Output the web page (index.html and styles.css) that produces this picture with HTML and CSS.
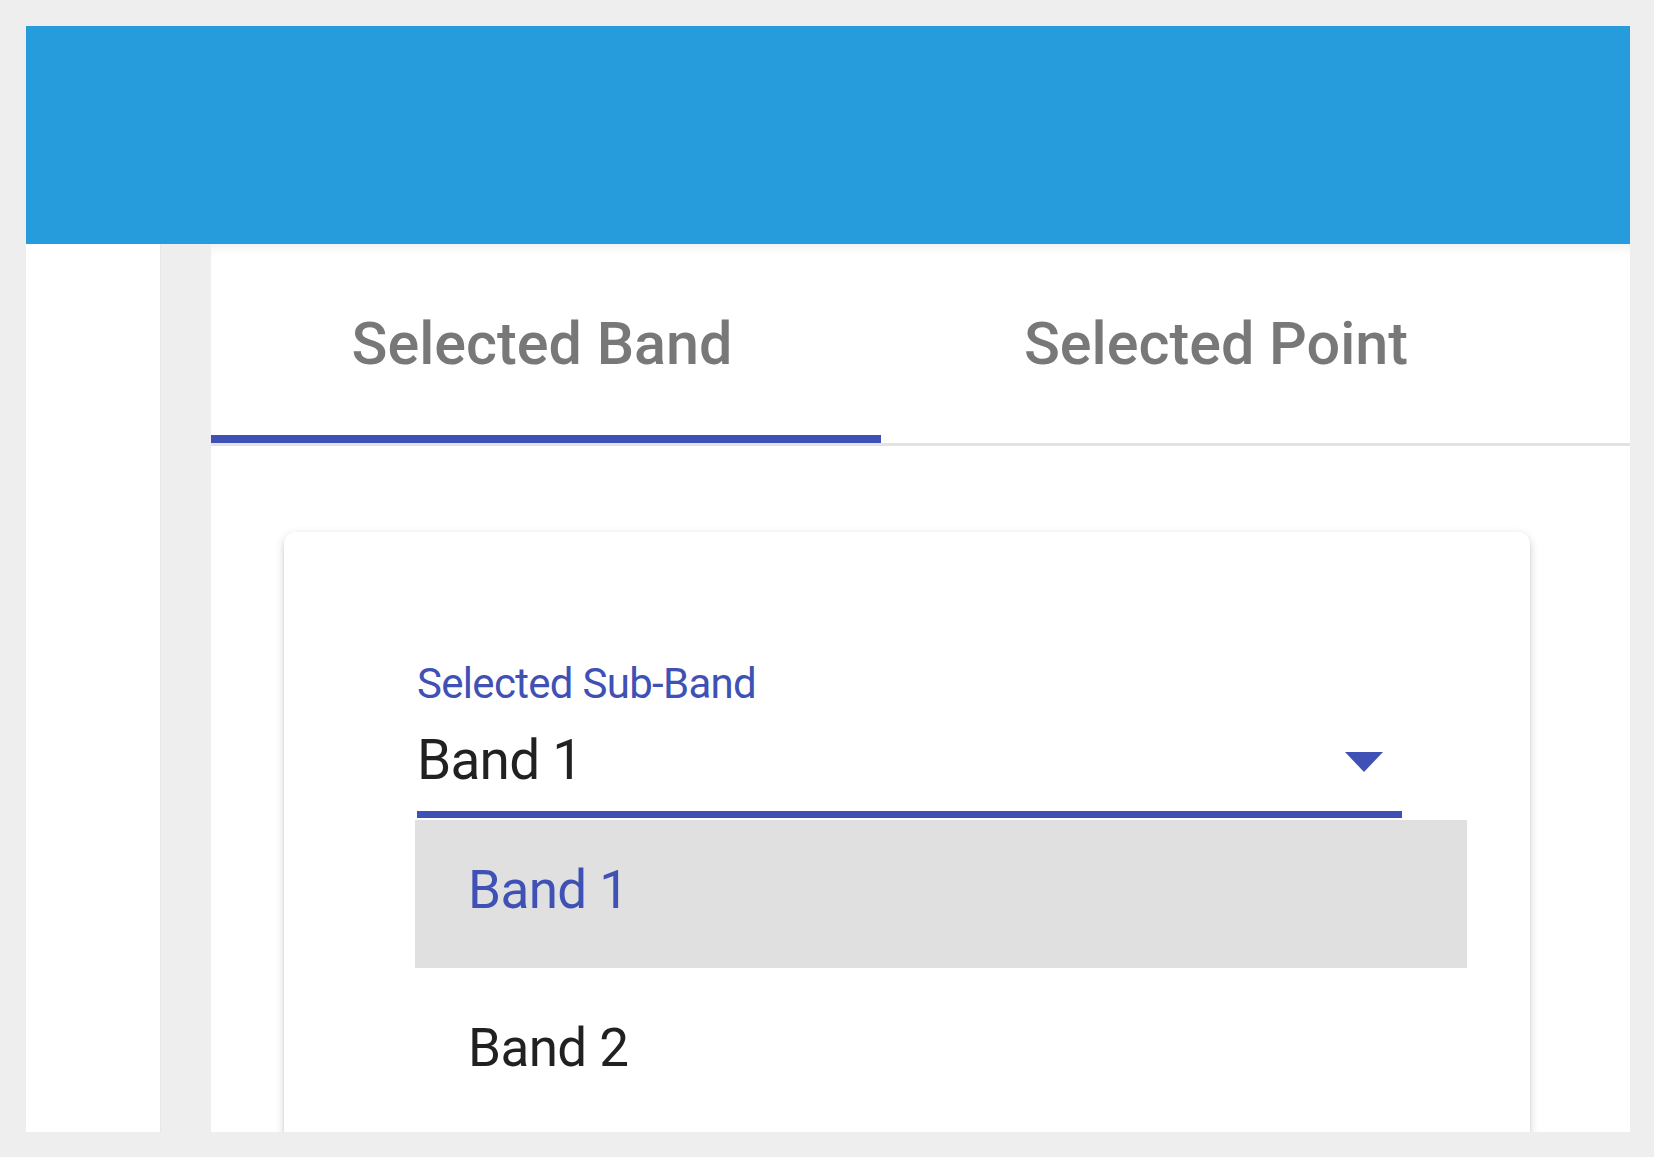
FILE: index.html
```html
<!DOCTYPE html>
<html lang="en">
<head>
<meta charset="utf-8">
<title>Selected Band</title>
<link rel="stylesheet" href="styles.css">
</head>
<body>
<div class="frame">
  <div class="app">
    <header class="appbar"></header>
    <div class="body">
      <aside class="side"></aside>
      <div class="gutter"></div>
      <main class="main">
        <nav class="tabs">
          <div class="tab active">Selected Band</div>
          <div class="tab">Selected Point</div>
        </nav>
        <section class="content">
          <div class="card">
            <div class="field">
              <label class="field-label">Selected Sub-Band</label>
              <div class="select">
                <span class="select-value">Band 1</span>
                <svg class="select-arrow" viewBox="0 0 10 5" preserveAspectRatio="none" aria-hidden="true"><path d="M0 0l5 5 5-5z"/></svg>
                <ul class="menu">
                  <li class="menu-item selected">Band 1</li>
                  <li class="menu-item">Band 2</li>
                </ul>
              </div>
            </div>
          </div>
        </section>
      </main>
    </div>
  </div>
</div>
</body>
</html>
```

FILE: styles.css
```css
html, body {
  margin: 0;
  padding: 0;
  background: #ffffff;
  font-family: Roboto, "Liberation Sans", sans-serif;
}

.frame {
  width: 1654px;
  height: 1157px;
  box-sizing: border-box;
  padding: 26px 24px 25px 26px;
  background: #eeeeee;
}

.app {
  height: 100%;
  display: flex;
  flex-direction: column;
  background: #ffffff;
}

.appbar {
  flex: none;
  height: 218px;
  background: #279cdd;
}

.body {
  flex: 1;
  min-height: 0;
  display: flex;
}

.side {
  flex: none;
  width: 135px;
  box-sizing: border-box;
  background: #ffffff;
  border-right: 1px solid #e6e6e6;
}

.gutter {
  flex: none;
  width: 50px;
  background: #eeeeee;
}

.main {
  flex: 1;
  min-width: 0;
  display: flex;
  flex-direction: column;
  overflow: hidden;
  background: #ffffff;
}

.tabs {
  flex: none;
  display: flex;
  height: 202px;
  box-sizing: border-box;
  border-bottom: 3px solid #e3e3e3;
  box-shadow: inset 0 10px 12px -8px rgba(0, 0, 0, 0.08);
}

.tab {
  width: 670px;
  box-sizing: border-box;
  padding-top: 7px;
  display: flex;
  align-items: center;
  justify-content: center;
  font-size: 59.3px;
  font-weight: 500;
  color: #787878;
  border-bottom: 8px solid transparent;
}

.tab.active {
  padding-right: 8px;
  border-bottom-color: #3f51b5;
}

.content {
  flex: 1;
  padding: 86px 100px 0 73px;
}

.card {
  height: 900px;
  box-sizing: border-box;
  padding: 127px 128px 0 133px;
  background: #ffffff;
  border-radius: 12px;
  box-shadow: 0 3px 10px rgba(0, 0, 0, 0.18), 0 3px 3px rgba(0, 0, 0, 0.08);
}

.field {
  display: flex;
  flex-direction: column;
}

.field-label {
  display: block;
  font-size: 42px;
  line-height: 50px;
  letter-spacing: -0.7px;
  color: #3f51b5;
}

.select {
  position: relative;
  margin-top: 17px;
  height: 68px;
  padding-bottom: 17px;
  display: flex;
  align-items: flex-start;
  border-bottom: 7px solid #3f51b5;
}

.select-value {
  flex: 1;
  font-size: 55px;
  line-height: 68px;
  letter-spacing: -0.8px;
  color: rgba(0, 0, 0, 0.87);
}

.select-arrow {
  flex: none;
  width: 38px;
  height: 20px;
  margin-top: 26px;
  margin-right: 19px;
  fill: #3f51b5;
}

.menu {
  position: absolute;
  top: calc(100% + 9px);
  left: -2px;
  width: 1052px;
  margin: 0;
  padding: 0;
  list-style: none;
  background: #ffffff;
}

.menu-item {
  padding: 38px 51px 46px 53px;
  font-size: 53px;
  line-height: 64px;
  letter-spacing: -0.6px;
  color: rgba(0, 0, 0, 0.87);
}

.menu-item + .menu-item {
  padding-top: 48px;
}

.menu-item.selected {
  background: #e0e0e0;
  color: #3f51b5;
}
```
